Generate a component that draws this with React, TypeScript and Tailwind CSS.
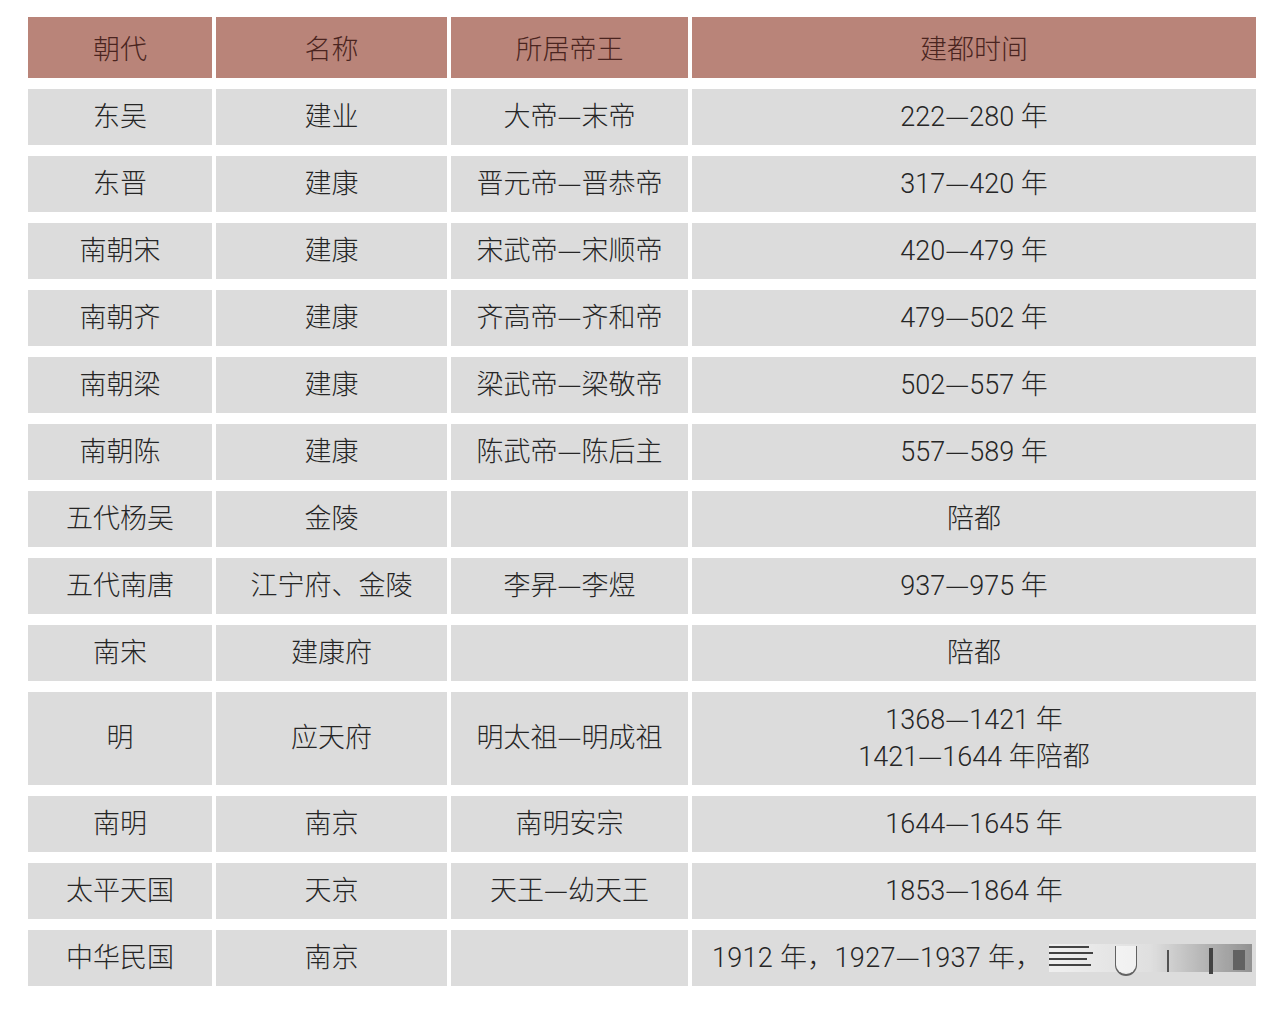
import React from 'react';

type Row = { dynasty: string; name: string; rulers: string; time: string; tall?: boolean; mark?: boolean };

const rows: Row[] = [
  { dynasty: '东吴', name: '建业', rulers: '大帝—末帝', time: '222—280 年' },
  { dynasty: '东晋', name: '建康', rulers: '晋元帝—晋恭帝', time: '317—420 年' },
  { dynasty: '南朝宋', name: '建康', rulers: '宋武帝—宋顺帝', time: '420—479 年' },
  { dynasty: '南朝齐', name: '建康', rulers: '齐高帝—齐和帝', time: '479—502 年' },
  { dynasty: '南朝梁', name: '建康', rulers: '梁武帝—梁敬帝', time: '502—557 年' },
  { dynasty: '南朝陈', name: '建康', rulers: '陈武帝—陈后主', time: '557—589 年' },
  { dynasty: '五代杨吴', name: '金陵', rulers: '', time: '陪都' },
  { dynasty: '五代南唐', name: '江宁府、金陵', rulers: '李昇—李煜', time: '937—975 年' },
  { dynasty: '南宋', name: '建康府', rulers: '', time: '陪都' },
  { dynasty: '明', name: '应天府', rulers: '明太祖—明成祖', time: '1368—1421 年\n1421—1644 年陪都', tall: true },
  { dynasty: '南明', name: '南京', rulers: '南明安宗', time: '1644—1645 年' },
  { dynasty: '太平天国', name: '天京', rulers: '天王—幼天王', time: '1853—1864 年' },
  { dynasty: '中华民国', name: '南京', rulers: '', time: '1912 年，1927—1937 年，', mark: true },
];

const cols = 'grid grid-cols-[184px_231px_237px_564px] gap-x-[4px]';

// the long dash is taken from the CJK face so it spans a full em
function Dashed({ text }: { text: string }) {
  const parts = text.split('—');
  return (
    <span className="h-[37px] leading-[37px]">
      {parts.map((p, i) => (
        <React.Fragment key={i}>
          {i > 0 && <span className="font-['Noto_Sans_CJK_SC',sans-serif] leading-none">—</span>}
          {p}
        </React.Fragment>
      ))}
    </span>
  );
}

function Watermark() {
  return (
    <div className="absolute left-[357px] top-[14px] h-[28px] w-[203px] bg-gradient-to-r from-[#f2f2f2] via-[#e0e0e0] to-[#8a8a8a] opacity-90">
      <div className="absolute left-0 top-[2px] flex flex-col gap-[4px]">
        <div className="h-[2px] w-[40px] bg-[#333]" />
        <div className="h-[2px] w-[44px] bg-[#333]" />
        <div className="h-[2px] w-[38px] bg-[#333]" />
        <div className="h-[2px] w-[42px] bg-[#333]" />
      </div>
      <div className="absolute left-[66px] top-[2px] h-[30px] w-[22px] rounded-b-full border-b-2 border-x border-[#555] bg-white/60" />
      <div className="absolute left-[118px] top-[6px] h-[22px] w-[2px] bg-[#444]" />
      <div className="absolute left-[160px] top-[4px] h-[26px] w-[4px] bg-[#333]" />
      <div className="absolute left-[184px] top-[6px] h-[20px] w-[12px] bg-[#555]" />
    </div>
  );
}

export default function App() {
  return (
    <div className="w-[1280px] h-[1009px] bg-white pl-[28px] pt-[17px] font-['Roboto','Noto_Sans_CJK_SC',sans-serif] font-light text-[27px] text-[#262626]">
      <div className="flex flex-col gap-[11px] w-[1227px]">
        <div className={`${cols} h-[61px] text-[#4a2420]`}>
          {['朝代', '名称', '所居帝王', '建都时间'].map((h) => (
            <div key={h} className="bg-[#b98479] flex items-center justify-center pt-[5px]">
              {h}
            </div>
          ))}
        </div>
        {rows.map((r, i) => (
          <div key={i} className={`${cols} ${r.tall ? 'h-[93px]' : 'h-[56px]'}`}>
            <div className="bg-[#dcdcdc] flex items-center justify-center">{r.dynasty}</div>
            <div className="bg-[#dcdcdc] flex items-center justify-center">{r.name}</div>
            <div className="bg-[#dcdcdc] flex items-center justify-center">
              <Dashed text={r.rulers} />
            </div>
            <div className={`bg-[#dcdcdc] flex items-center relative ${r.mark ? 'pl-[20px] tracking-[0.3px]' : 'justify-center'}`}>
              <div className="flex flex-col items-center">
                {r.time.split('\n').map((line) => (
                  <Dashed key={line} text={line} />
                ))}
              </div>
              {r.mark && <Watermark />}
            </div>
          </div>
        ))}
      </div>
    </div>
  );
}
